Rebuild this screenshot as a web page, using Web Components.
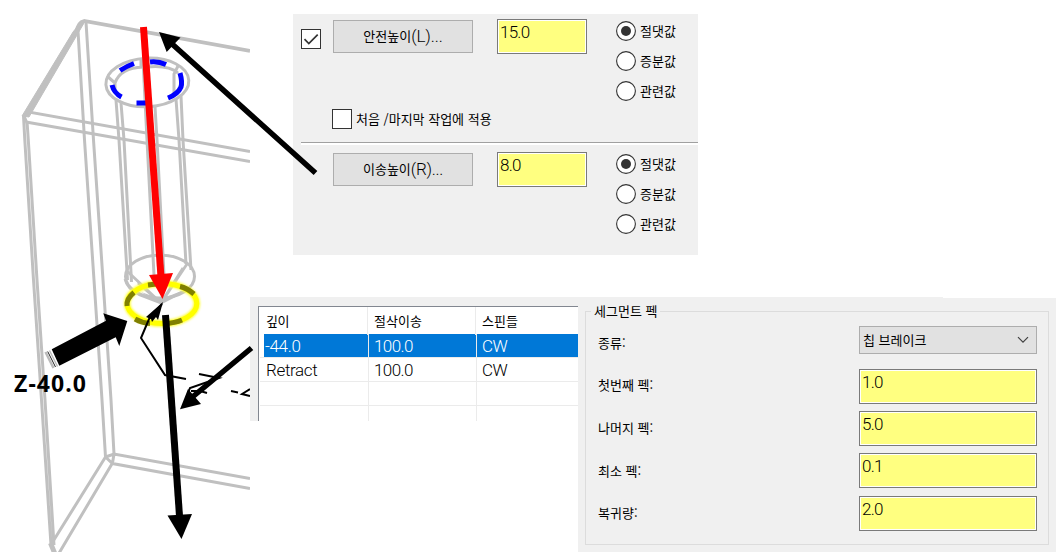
<!DOCTYPE html>
<html lang="ko">
<head>
<meta charset="utf-8">
<title>Drill cycle parameters</title>
<style>
html,body{margin:0;padding:0;background:#fff}
body{width:1056px;height:552px;overflow:hidden;color:#000;font:13px/20px "Noto Sans CJK KR",sans-serif;--num:300 17px/20px Roboto,"Noto Sans CJK KR",sans-serif;--num-gap:-.75px;--face:#f0f0f0}
</style>
</head>
<body>
<drill-page></drill-page>
<script>
function define(name, html, setup) {
  const template = document.createElement('template');
  template.innerHTML = html;
  customElements.define(name, class extends HTMLElement {
    constructor() {
      super();
      this.attachShadow({ mode: 'open' }).append(template.content.cloneNode(true));
    }
    connectedCallback() { if (setup) setup(this, this.shadowRoot); }
  });
}

define('push-button', `
<style>
:host{box-sizing:border-box;width:140px;height:33px;padding-bottom:2px;display:flex;align-items:center;justify-content:center;background:#e1e1e1;border:1px solid #adadad;white-space:nowrap}
::slotted(b){font:var(--num);letter-spacing:var(--latin-gap,-.1px)}
</style><slot></slot>`);

define('value-field', `
<style>
:host{box-sizing:border-box;display:block;width:90px;height:35px;background:#ffff80;border:1px solid #7a7a7a;box-shadow:inset 0 0 0 1px #fff;padding:2px 0 0 2px;font:var(--num);letter-spacing:var(--num-gap)}
</style><slot></slot>`);

define('check-box', `
<style>
:host{display:flex;align-items:center;gap:4px;height:20px;white-space:nowrap}
i{box-sizing:border-box;flex:none;width:20px;height:20px;border:1px solid #333;background:#fff}
svg{display:none}
:host([checked]) svg{display:block}
</style><i><svg width="18" height="18" viewBox="0 0 18 18"><path d="M2.5 9.2 6.8 13.5 15.7 4.6" fill="none" stroke="#333" stroke-width="1.7"/></svg></i><slot></slot>`);

define('radio-option', `
<style>
:host{display:flex;align-items:center;gap:4px;height:20px;white-space:nowrap}
svg{flex:none}
.dot{display:none}
:host([checked]) .dot{display:block}
</style><svg width="20" height="20" viewBox="0 0 20 20"><circle cx="10" cy="10" r="9.4" fill="#fff" stroke="#333" stroke-width="1.1"/><circle class="dot" cx="10" cy="10" r="5" fill="#333"/></svg><slot></slot>`);

define('radio-group', `
<style>:host{display:flex;flex-direction:column;gap:10px}</style>
<radio-option checked>절댓값</radio-option><radio-option>증분값</radio-option><radio-option>관련값</radio-option>`);

define('height-panel', `
<style>
:host{display:block;box-sizing:border-box;width:405px;height:241px;background:var(--face)}
section{display:flex;padding-left:8px}
.first{height:121px;padding-top:7px}
.second{padding:8px 0 0 40px}
.left{width:286px}
.row{display:flex;align-items:flex-start}
.row check-box{margin:8px 12px 0 0}
push-button{margin:-1px 24px 0 0}
.first push-button{margin-top:-1px}
value-field{margin-top:-2px}
.sub{margin:55px 0 0 31px}
.gap{width:29px}
hr{margin:0 0 0 8px;border:0;border-top:1px solid #a0a0a0;border-bottom:2px solid #fff}
.second push-button{--latin-gap:-.3px;margin-top:0}
.second value-field{margin-top:-1px}
.second radio-group{margin-top:1px}
</style>
<section class="first">
  <div class="left">
    <div class="row"><check-box checked></check-box><push-button>안전높이<b>(L)...</b></push-button><value-field>15.0</value-field></div>
    <check-box class="sub">처음 /마지막 작업에 적용</check-box>
  </div>
  <div class="gap"></div><radio-group></radio-group>
</section>
<hr>
<section class="second">
  <div class="row"><push-button>이송높이<b>(R)...</b></push-button><value-field>8.0</value-field></div>
  <div class="gap"></div><radio-group></radio-group>
</section>`);

define('depth-row', `
<style>
:host{display:grid;grid-template-columns:108px 108px 1fr;height:23px;margin-left:1px;border-bottom:1px solid #ebebeb;font:var(--num);line-height:24px;letter-spacing:-.6px}
:host([selected]){background:linear-gradient(#0078d7,#0078d7) 4px 0/100% 100% no-repeat padding-box;color:#fff}
:host([head]){grid-template-columns:107px 108px 1fr;height:27px;font:13px/28px "Noto Sans CJK KR",sans-serif;letter-spacing:0;border:0}
span{padding-left:5px;border-left:1px solid #ebebeb}
:host([head]) span{padding-left:6px}
span:first-of-type,:host([head]) span:first-of-type{border:0;padding-left:6px;letter-spacing:-.35px}
:host([selected]) span:first-of-type{padding-left:5px}
</style><span></span><span></span><span></span>`, (host, root) => {
  const cells = (host.getAttribute('cells') || '').split('|');
  root.querySelectorAll('span').forEach((s, i) => s.textContent = cells[i] || '');
});

define('depth-table', `
<style>
:host{display:block;box-sizing:border-box;width:328px;height:124px;padding:9px 0 0 8px;background:var(--face)}
div{height:114px;overflow:hidden;background:#fff;border:solid #828790;border-width:1px 0 0 1px}
</style><div>
<depth-row head cells="깊이|절삭이송|스핀들"></depth-row>
<depth-row selected cells="-44.0|100.0|CW"></depth-row>
<depth-row cells="Retract|100.0|CW"></depth-row>
<depth-row></depth-row><depth-row></depth-row></div>`);

define('combo-box', `
<style>
:host{box-sizing:border-box;display:flex;align-items:center;justify-content:space-between;width:178px;height:28px;padding:0 7px 0 3px;background:#e1e1e1;border:1px solid #adadad}
</style><slot></slot><svg width="12" height="8" viewBox="0 0 12 8"><path d="M1 1.2 6 6.2 11 1.2" fill="none" stroke="#404040" stroke-width="1.2"/></svg>`);

define('peck-panel', `
<style>
:host{display:block;box-sizing:border-box;width:478px;height:255px;padding:14px 7px 0;background:linear-gradient(#fff,#fff) 365px 0/113px 1px no-repeat var(--face)}
fieldset{box-sizing:border-box;position:relative;margin:0;border:1px solid #dcdcdc;height:234px;padding:14px 11px 0 12px;width:464px;display:grid;grid-template-columns:1fr 178px;grid-template-rows:28px 35px 35px 35px 35px;row-gap:8px;align-items:center}
h4{position:absolute;left:5px;top:-11px;margin:0;padding:0 3px;background:var(--face);font:inherit}
value-field{width:178px}
label{white-space:nowrap;padding-top:11px}
label:first-of-type{padding-top:6px}
</style><fieldset><h4>세그먼트 펙</h4>
<label>종류:</label><combo-box>칩 브레이크</combo-box>
<label>첫번째 펙:</label><value-field style="margin-top:13px">1.0</value-field>
<label>나머지 펙:</label><value-field style="margin-top:12px">5.0</value-field>
<label>최소 펙:</label><value-field style="margin-top:10px">0.1</value-field>
<label style="padding-top:9px">복귀량:</label><value-field style="margin-top:10px">2.0</value-field>
</fieldset>`);

define('hole-diagram', `
<style>:host{display:block;width:250px;height:552px;overflow:hidden}svg{display:block}text{font:bold 23px "Noto Sans","Noto Sans CJK KR",sans-serif}</style>
<svg width="250" height="552" viewBox="0 0 250 552" fill="none">
<defs><filter id="glow" x="-20%" y="-30%" width="140%" height="160%"><feGaussianBlur stdDeviation="1.2"/></filter></defs>
<g stroke="#c0c0c0" stroke-width="3">
<path stroke-width="3.8" d="M76 33Q78 22 84 21L250 51"/>
<path d="M73 32 81 22 84 23 29 117 22 116Z" fill="#c0c0c0" stroke-width="1"/>
<path d="M78 31 84.5 140 94 280 102 400 105.5 457M86 22 93.5 140 103 280 111 400 114 454"/>
<path d="M23.5 116 24.8 140 33.5 280 41.5 400 51 545 54 552M27 121 28.3 140 37 280 45 400 54 545"/>
<path d="M24 117 29 112 250 151.5M26 122 250 161.5M24 116 27 123"/>
<path d="M105.5 457 52 543M112.5 463 58.5 554M105.5 457 114 454 250 478.5M105.5 457 112.5 463.5 250 488.5M112.5 463 114 454"/>
<path d="M50.5 543 55 554" stroke-width="5"/>
<ellipse cx="147.3" cy="82.5" rx="41.5" ry="24.3" transform="rotate(-3 147 82)"/>
<path d="M115 83Q120 68 143 67M147 67Q169 65 178 73M107 76 115 83V89M141 58V66M178 66 174 74V96"/>
<path d="M116 100 119 140 127.5 280M121 103 124 140 131.5 282M176 99 179 140 186 264M181 96 183 140 191 270"/>
<path d="M143 60 147 140 154 275M155 107 157 140 164 275"/>
<ellipse cx="160" cy="276.5" rx="34.5" ry="21.5"/>
<path d="M127 271 161 303 187 264M125 279Q127 289 140 295L161 303 190 288M138 283 161 303 183 268" stroke-width="2.8"/>
<path d="M141 292 161 299 184 290 161 304Z" fill="#c0c0c0" stroke="none"/>
</g>
<g stroke="#00f" stroke-width="5"><path d="M120 70.500Q127 66 134 63.500M150 62Q158 61 166 64.500M180 73Q182.500 82 181 87 178 94 168 98M112 85Q114 93 121.500 97M136.500 103H147"/></g>
<ellipse cx="162" cy="303.500" rx="34.800" ry="20" stroke="#ffff40" stroke-width="7" filter="url(#glow)"/>
<ellipse cx="162" cy="303.500" rx="34.800" ry="20" stroke="#ff0" stroke-width="5"/>
<path d="M127 306Q126 299 134 292.500M148 285 156 284M180 286.500Q187 288 194 294M135 319Q142 323 150 323.500M165 323.500Q175 323 182 320" stroke="#808000" stroke-width="5"/>
<g stroke="#000" stroke-width="2"><path d="M162 304 149 319 141 338 165 375 186 379"/><path d="M163 302 146 317 151 319 152 322 156 317 158 320Z" fill="#000" stroke="none"/><path d="M199 374 219 378 190 388 188 393M191 391H197M200 391 207 393M231 391 238 392.500M250 389 242 394 250 396"/></g>
<path d="M143.500 27 161 277" stroke="#f00" stroke-width="7"/><path d="M149 275 173 273 162.500 299Z" fill="#f00"/>
<path d="M165.500 315 179.500 516" stroke="#000" stroke-width="7"/><path d="M167.500 515.500 192 514 181.500 539Z" fill="#000"/>
<path d="M51.700 349.300 106 320.700 103.300 313.300 127.300 321 119.300 346 115.700 337.300 59.300 365.700Z" fill="#000"/>
<path d="M45.500 352 53.500 368" stroke="#bbb" stroke-width="2.500"/><path d="M47.700 351.500 55.500 367" stroke="#222"/><path d="M49.500 350.500 57.500 366.500" stroke="#bbb" stroke-width="1.400"/>
<text x="14" y="392" fill="#000" textLength="72">Z-40.0</text>
</svg>`);

define('callout-arrows', `
<style>:host{position:absolute;left:0;top:0;pointer-events:none}svg{display:block}</style>
<svg width="330" height="552" viewBox="0 0 330 552"><g stroke="#000" stroke-width="5.500"><path d="M315.500 173 171 43M251.500 348 190 399"/></g><path d="M159 32 180.500 37.500 166.700 52ZM180 409.300 188 389 201 404Z"/></svg>`);

define('drill-page', `
<style>
:host{display:flex;position:relative;width:1056px;height:552px}
main{display:flex;flex-direction:column;width:806px}
height-panel{margin:14px 0 42px 43px}
.bottom{display:flex;align-items:flex-start}
</style>
<hole-diagram></hole-diagram>
<main><height-panel></height-panel><div class="bottom"><depth-table></depth-table><peck-panel></peck-panel></div></main>
<callout-arrows></callout-arrows>`);
</script>
</body>
</html>
